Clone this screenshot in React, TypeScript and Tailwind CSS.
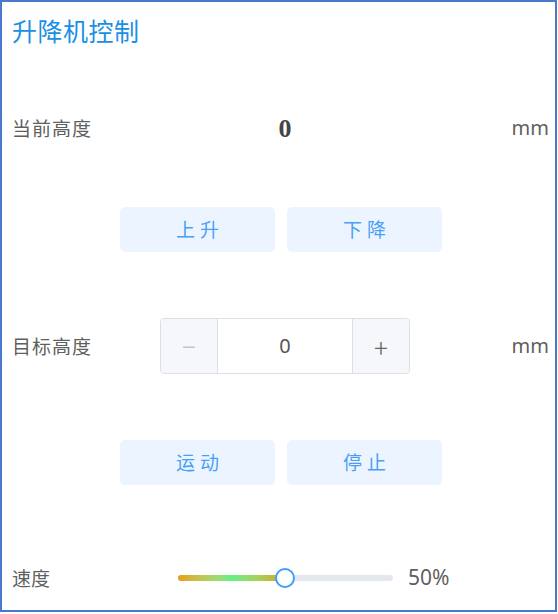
const cjk = { fontFamily: '"Noto Sans CJK SC", "Noto Sans", sans-serif' };

function ActionButton({ label }: { label: string }) {
  return (
    <button className="h-[45px] w-[155px] rounded-[5px] bg-[#ecf5ff] text-[19px] tracking-[5px] text-[#4a9ff5] pl-[5px]">
      {label}
    </button>
  );
}

export default function App() {
  return (
    <div
      className="flex h-[612px] w-[557px] flex-col border-2 border-[#4a78cc] bg-white"
      style={cjk}
    >
      <div className="flex h-[58px] items-center pl-[10px] text-[25px] tracking-[0.5px] text-[#1a8fe6]">
        升降机控制
      </div>

      <div className="mt-[48px] flex h-[40px] items-center pl-[10px] pr-[6px] text-[19px] text-[#5f5f5f]">
        <span className="w-[148px] tracking-[1px]">当前高度</span>
        <span className="w-[250px] text-center font-['Liberation_Serif',serif] text-[26px] font-bold text-[#444]">
          0
        </span>
        <span className="flex-1 text-right font-['Noto_Sans',sans-serif] text-[20px]">mm</span>
      </div>

      <div className="mt-[59px] flex gap-[12px] pl-[118px]">
        <ActionButton label="上升" />
        <ActionButton label="下降" />
      </div>

      <div className="mt-[66px] flex h-[56px] items-center pl-[10px] pr-[6px] text-[19px] text-[#5f5f5f]">
        <span className="w-[148px] tracking-[1px]">目标高度</span>
        <div className="flex h-[56px] w-[250px] overflow-hidden rounded-[4px] border border-[#dcdfe6]">
          <div className="flex w-[57px] items-center justify-center border-r border-[#dcdfe6] bg-[#f5f7fa] text-[24px] text-[#c0c4cc]">
            −
          </div>
          <div className="flex flex-1 items-center justify-center font-['Noto_Sans',sans-serif] text-[20px] text-[#555]">
            0
          </div>
          <div className="flex w-[57px] items-center justify-center border-l border-[#dcdfe6] bg-[#f5f7fa] text-[26px] font-light text-[#666]">
            +
          </div>
        </div>
        <span className="flex-1 text-right font-['Noto_Sans',sans-serif] text-[20px]">mm</span>
      </div>

      <div className="mt-[66px] flex gap-[12px] pl-[118px]">
        <ActionButton label="运动" />
        <ActionButton label="停止" />
      </div>

      <div className="mt-[73px] flex h-[40px] items-center pl-[10px] text-[19px] text-[#5f5f5f]">
        <span className="w-[166px]">速度</span>
        <div className="relative h-[6px] w-[215px] rounded-full bg-[#e4e7ed]">
          <div className="h-[6px] w-[107px] rounded-l-full bg-gradient-to-r from-[#e8a00c] via-[#62ef86] to-[#cdab12]" />
          <div className="absolute left-[97px] top-[-7px] h-[20px] w-[20px] rounded-full border-[2.5px] border-[#409eff] bg-white" />
        </div>
        <span className="ml-[15px] font-['Noto_Sans',sans-serif] text-[21px]">50%</span>
      </div>
    </div>
  );
}
